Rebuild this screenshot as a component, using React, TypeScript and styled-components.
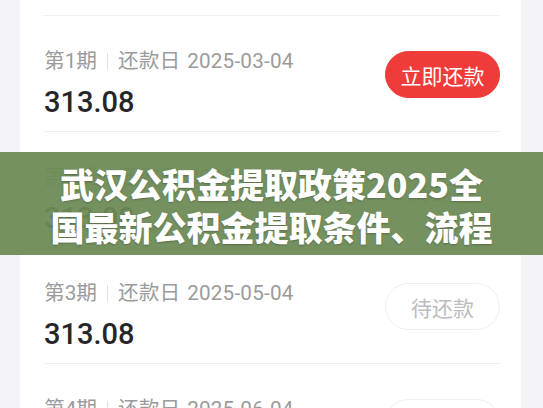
import React from "react";
import styled, { createGlobalStyle } from "styled-components";

const GlobalStyle = createGlobalStyle`
  html, body {
    margin: 0;
    padding: 0;
    background: #f3f3f8;
    overflow: hidden;
  }
  body {
    font-family: Roboto, "Noto Sans CJK SC", sans-serif;
  }
`;

const Page = styled.div`
  position: relative;
  width: 543px;
  height: 408px;
  overflow: hidden;
  background: #f3f3f8;
`;

const Card = styled.div`
  margin: 0 22px 0 20px;
  padding: 0 21px 0 23px;
  background: #ffffff;
`;

const Header = styled.div`
  height: 16px;
  box-sizing: border-box;
  border-bottom: 1px solid #f0f0f0;
  overflow: hidden;
  display: flex;
  align-items: flex-end;
`;

const HeaderText = styled.span`
  margin-bottom: 13px;
  font-size: 20px;
  line-height: 24px;
  color: #c8c8c8;
`;

const Row = styled.div`
  height: 116px;
  box-sizing: border-box;
  padding: 33px 0 11px 1px;
  border-bottom: 1px solid #efefef;
  display: flex;
  justify-content: space-between;
  align-items: flex-start;
`;

const Info = styled.div`
  display: flex;
  flex-direction: column;
`;

const Label = styled.div`
  display: flex;
  align-items: center;
  font-size: 20.7px;
  line-height: 24px;
  color: #9b9b9b;
  white-space: nowrap;
`;

const Sep = styled.span`
  display: inline-block;
  width: 1px;
  height: 17px;
  margin: 0 10px 0 10px;
  background: #e2e2e2;
`;

const DateText = styled.span`
  margin-left: 7px;
  letter-spacing: 0.2px;
`;

const Amount = styled.div`
  margin-top: 11px;
  font-size: 29px;
  line-height: 36px;
  font-weight: 500;
  color: #262626;
`;

const PayButton = styled.button<{ $active?: boolean }>`
  margin-top: 2px;
  width: 115px;
  height: 47px;
  border-radius: 24px;
  padding: 0;
  font-family: "Noto Sans CJK SC", sans-serif;
  font-size: 21px;
  line-height: 47px;
  text-align: center;
  box-sizing: border-box;
  border: 1px solid ${(p) => (p.$active ? "#f03b3b" : "#efefef")};
  background: ${(p) => (p.$active ? "#f03b3b" : "#ffffff")};
  color: ${(p) => (p.$active ? "#ffffff" : "#bcbcbc")};
`;

const Banner = styled.div`
  position: absolute;
  top: 152px;
  left: 0;
  right: 0;
  height: 103px;
  padding-top: 3px;
  box-sizing: border-box;
  background: rgba(108, 138, 86, 0.94);
  display: flex;
  flex-direction: column;
  align-items: center;
  justify-content: center;
`;

const TitleLine = styled.div`
  font-family: "Noto Sans CJK SC", sans-serif;
  font-size: 34px;
  line-height: 43px;
  font-weight: 900;
  color: #ffffff;
  white-space: nowrap;
  text-shadow: 0 1px 2px rgba(0, 0, 0, 0.25);
`;

const periods = [
  { no: 1, date: "2025-03-04", active: true },
  { no: 2, date: "2025-04-04", active: false },
  { no: 3, date: "2025-05-04", active: false },
  { no: 4, date: "2025-06-04", active: false },
];

const App = () => {
  return (
    <Page>
      <GlobalStyle />
      <Card>
        <Header>
          <HeaderText>共12期 应还总额</HeaderText>
        </Header>
        {periods.map((p) => (
          <Row key={p.no}>
            <Info>
              <Label>
                第{p.no}期
                <Sep />
                还款日
                <DateText>{p.date}</DateText>
              </Label>
              <Amount>313.08</Amount>
            </Info>
            <PayButton $active={p.active}>{p.active ? "立即还款" : "待还款"}</PayButton>
          </Row>
        ))}
      </Card>
      <Banner>
        <TitleLine>武汉公积金提取政策2025全</TitleLine>
        <TitleLine>国最新公积金提取条件、流程</TitleLine>
      </Banner>
    </Page>
  );
};

export default App;
